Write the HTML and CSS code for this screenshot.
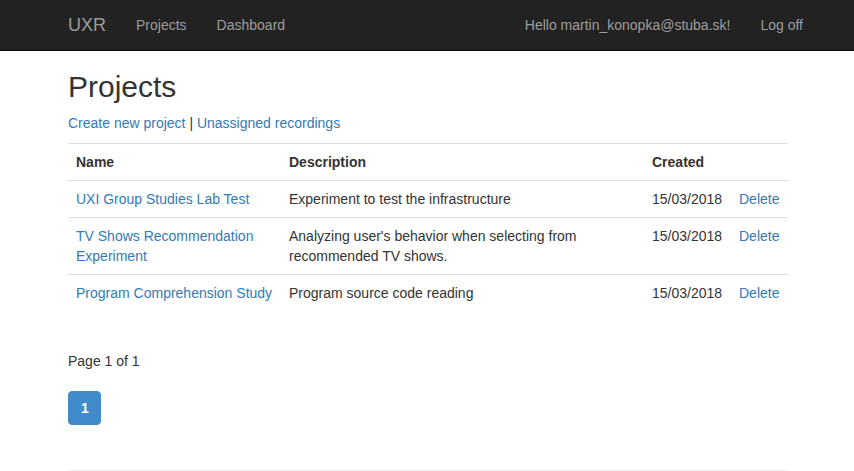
FILE: index.html
```html
<!DOCTYPE html>
<html>
<head>
<meta charset="utf-8">
<title>Projects</title>
<link rel="stylesheet" href="styles.css">
</head>
<body>
<nav class="navbar">
  <div class="container nav-inner">
    <div class="nav-left">
      <a class="brand" href="#">UXR</a>
      <a class="nav-link" href="#">Projects</a>
      <a class="nav-link" href="#">Dashboard</a>
    </div>
    <div class="nav-right">
      <a class="nav-link" href="#">Hello martin_konopka@stuba.sk!</a>
      <a class="nav-link" href="#">Log off</a>
    </div>
  </div>
</nav>
<div class="container body-content">
  <h2 class="title">Projects</h2>
  <p class="actions"><a href="#">Create new project</a> | <a href="#">Unassigned recordings</a></p>
  <table class="table">
    <tr>
      <th class="c-name">Name</th>
      <th class="c-desc">Description</th>
      <th class="c-date">Created</th>
      <th class="c-act"></th>
    </tr>
    <tr>
      <td><a href="#">UXI Group Studies Lab Test</a></td>
      <td>Experiment to test the infrastructure</td>
      <td>15/03/2018</td>
      <td><a href="#">Delete</a></td>
    </tr>
    <tr>
      <td><a href="#">TV Shows Recommendation Experiment</a></td>
      <td>Analyzing user's behavior when selecting from recommended TV shows.</td>
      <td>15/03/2018</td>
      <td><a href="#">Delete</a></td>
    </tr>
    <tr>
      <td><a href="#">Program Comprehension Study</a></td>
      <td>Program source code reading</td>
      <td>15/03/2018</td>
      <td><a href="#">Delete</a></td>
    </tr>
  </table>
  <div class="spacer"></div>
  <div class="page-info">Page 1 of 1</div>
  <ul class="pagination">
    <li class="active"><a href="#">1</a></li>
  </ul>
  <hr class="rule">
</div>
</body>
</html>
```
FILE: styles.css
```css
* { box-sizing: border-box; }
html, body { margin: 0; }
body {
  font-family: "Liberation Sans", Arial, Helvetica, sans-serif;
  font-size: 14px;
  line-height: 20px;
  color: #333;
  background: #fff;
  padding-top: 50px;
}
a { color: #337ab7; text-decoration: none; }
.container {
  width: 750px;
  margin: 0 auto;
  padding: 0 14px 0 16px;
}
.navbar {
  position: fixed;
  top: 0; left: 0; right: 0;
  height: 51px;
  background: #222;
  border-bottom: 1px solid #080808;
  z-index: 10;
}
.nav-inner {
  display: flex;
  justify-content: space-between;
  height: 50px;
}
.nav-left, .nav-right { display: flex; }
.nav-left { margin-left: -15px; }
.nav-right { margin-right: -30px; }
.brand {
  color: #9d9d9d;
  font-size: 18px;
  line-height: 20px;
  padding: 15px;
  height: 50px;
}
.nav-link {
  color: #9d9d9d;
  padding: 15px;
  line-height: 20px;
}
.title {
  font-size: 30px;
  font-weight: 500;
  line-height: 33px;
  margin: 20px 0 10px;
}
.actions { margin: 0 0 10px; }
.table {
  width: 100%;
  border-collapse: collapse;
  border-spacing: 0;
  margin-bottom: 20px;
}
.table th, .table td {
  padding: 8px;
  text-align: left;
  vertical-align: top;
  border-top: 1px solid #ddd;
  line-height: 20px;
}
.table th { font-weight: bold; }
.c-name { width: 213px; }
.c-desc { width: 363px; }
.c-date { width: 87px; }
.c-act { width: 57px; }
.spacer { height: 20px; }
.page-info { line-height: 20px; }
.pagination {
  list-style: none;
  margin: 20px 0;
  padding: 0;
  display: flex;
}
.pagination li a {
  display: block;
  padding: 6px 12px 6px 12px;
  width: 33px;
  text-align: center;
  line-height: 20px;
  border: 1px solid #428bca;
  background: #428bca;
  color: #fff;
  border-radius: 4px;
  font-weight: bold;
}
.rule {
  margin: 45px 0 0;
  border: 0;
  border-top: 1px solid #eee;
  height: 0;
}
```
